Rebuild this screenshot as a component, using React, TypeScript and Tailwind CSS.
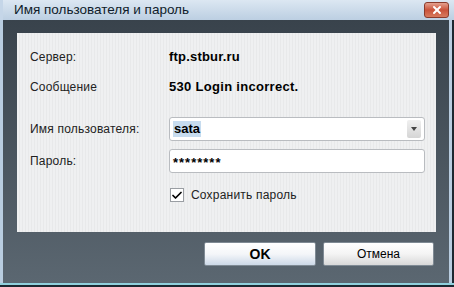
import { Check, X } from 'lucide-react';

const App = () => {
  return (
    <div className="w-[454px] h-[287px] overflow-hidden flex flex-col bg-[#2c3a44] font-['Liberation_Sans',Arial,sans-serif] text-[12px] text-black">
      {/* Title bar */}
      <div className="h-[20px] shrink-0 flex items-center justify-between pl-[11px] pr-[5px] bg-gradient-to-b from-[#dce7f2] to-[#bccfe2] border-l-[3px] border-[#c5d6e8]">
        <span className="text-[13.5px] text-[#0f1c2a] leading-none">Имя пользователя и пароль</span>
        <div className="w-[25px] h-[16px] rounded-[3px] border border-[#8a3b2c] bg-gradient-to-b from-[#e3a08e] via-[#c9523a] to-[#d77a5e] flex items-center justify-center">
          <X size={12} strokeWidth={4} className="text-white" />
        </div>
      </div>

      {/* Frame body */}
      <div className="flex-1 flex border-l-[3px] border-[#b9cde0]">
        <div className="flex-1 flex flex-col bg-gradient-to-b from-[#39434c] to-[#5b6771] pl-[14px] pt-[13px]">
          {/* Panel */}
          <div className="w-[419px] h-[199px] bg-[repeating-linear-gradient(90deg,#eff0f1_0px,#eff0f1_2px,#e8e9ea_2px,#e8e9ea_3px)] pl-[13px] pt-[15px]">
            <div className="flex items-center h-[18px]">
              <span className="w-[139px] text-[#222] tracking-[0.2px]">Сервер:</span>
              <span className="font-bold text-[13px] tracking-[0.2px]">ftp.stbur.ru</span>
            </div>
            <div className="flex items-center h-[18px] mt-[12px]">
              <span className="w-[139px] text-[#222] tracking-[0.2px]">Сообщение</span>
              <span className="font-bold text-[13px] tracking-[0.3px]">530 Login incorrect.</span>
            </div>
            <div className="flex items-center mt-[21px]">
              <span className="w-[139px] text-[#222] tracking-[0.2px]">Имя пользователя:</span>
              <div className="w-[256px] h-[24px] rounded-[3px] border border-[#b9bcc0] bg-white flex items-center justify-between pl-[3px] pr-[3px]">
                <span className="font-bold text-[13px] bg-[#c7dcef] px-[1px] leading-[16px]">sata</span>
                <div className="w-[14px] h-[18px] rounded-[2px] bg-gradient-to-b from-[#f0f0f0] to-[#d5d5d5] flex items-center justify-center">
                  <div className="w-0 h-0 border-l-[3px] border-r-[3px] border-t-[4px] border-l-transparent border-r-transparent border-t-[#444]" />
                </div>
              </div>
            </div>
            <div className="flex items-center mt-[8px]">
              <span className="w-[139px] text-[#222] tracking-[0.2px]">Пароль:</span>
              <div className="w-[256px] h-[24px] rounded-[3px] border border-[#b9bcc0] bg-white flex items-center pl-[3px]">
                <span className="font-bold text-[13px] tracking-[1px] leading-none pt-[2px]">********</span>
              </div>
            </div>
            <div className="flex items-center mt-[13px] ml-[140px]">
              <div className="w-[14px] h-[14px] border border-[#9a9ea3] bg-white flex items-center justify-center">
                <Check size={13} strokeWidth={3.5} className="text-black" />
              </div>
              <span className="ml-[7px] text-[#222] tracking-[0.2px]">Сохранить пароль</span>
            </div>
          </div>

          {/* Buttons */}
          <div className="flex gap-[7px] mt-[10px] pl-[187px]">
            <button className="w-[112px] h-[24px] rounded-[2px] border border-[#7f8a94] bg-gradient-to-b from-white via-[#f4f6f9] to-[#cdd9e8] font-bold text-[14px] leading-none">
              OK
            </button>
            <button className="w-[111px] h-[24px] rounded-[2px] border border-[#7f8a94] bg-gradient-to-b from-white via-[#f4f4f4] to-[#d8d8d8] text-[12px] leading-none">
              Отмена
            </button>
          </div>
        </div>
        <div className="w-[3px] bg-[#b9cde0]" />
        <div className="w-[2px] bg-[#1c2830]" />
      </div>
      <div className="h-[2px] shrink-0 bg-[#8fd0dc]" />
      <div className="h-[2px] shrink-0 bg-[#1c2830]" />
    </div>
  );
};

export default App;
